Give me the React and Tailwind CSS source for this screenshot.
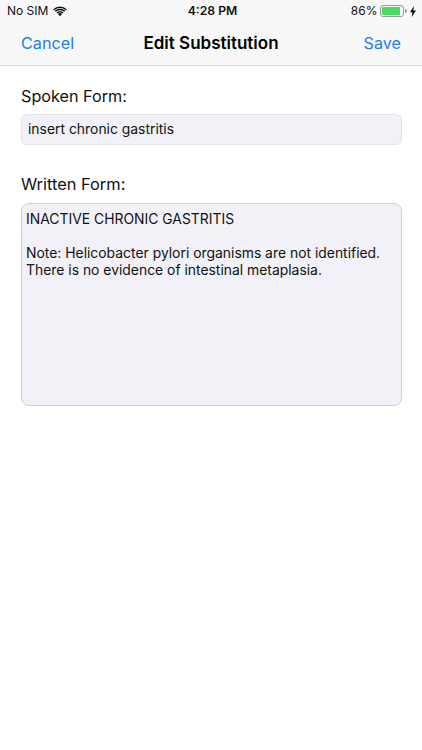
import React from "react";

const font = "font-['Inter','Liberation_Sans',sans-serif]";

const Wifi = () => (
  <svg width="14" height="11" viewBox="0 0 16 12" className="ml-[5px]">
    <path d="M8 11.5 L5.6 8.9 A3.6 3.6 0 0 1 10.4 8.9 Z" fill="#111" />
    <path d="M3.9 7.2 A6 6 0 0 1 12.1 7.2 L10.9 8.4 A4.3 4.3 0 0 0 5.1 8.4 Z" fill="#111" />
    <path d="M1.9 5.2 A8.8 8.8 0 0 1 14.1 5.2 L12.9 6.4 A7.1 7.1 0 0 0 3.1 6.4 Z" fill="#111" />
    <path d="M0.2 3.4 A11.3 11.3 0 0 1 15.8 3.4 L14.6 4.6 A9.6 9.6 0 0 0 1.4 4.6 Z" fill="#111" />
  </svg>
);

const Battery = () => (
  <div className="flex items-center ml-[3px]">
    <div className="w-[24px] h-[12px] rounded-[3px] border border-[#9a9a9a] p-[1px]">
      <div className="w-[86%] h-full rounded-[1px] bg-[#4cd964]" />
    </div>
    <div className="w-[1.5px] h-[4px] bg-[#9a9a9a] rounded-r-sm ml-[1px]" />
  </div>
);

const Bolt = () => (
  <svg width="6" height="11" viewBox="0 0 6 11" className="ml-[3px]">
    <path d="M3.8 0 L0 6.2 H2.4 L1.8 11 L6 4.4 H3.4 Z" fill="#111" />
  </svg>
);

export default function App() {
  return (
    <div className={`w-[422px] h-[750px] bg-white flex flex-col text-black ${font}`}>
      <div className="bg-[#f8f8f8] border-b border-[#d4d4d4] h-[66px] shrink-0">
        <div className="h-[22px] pl-[7px] pr-[6px] grid grid-cols-3 items-center text-[12px] text-[#111]">
          <div className="flex items-center">
            <span>No SIM</span>
            <Wifi />
          </div>
          <div className="text-center font-semibold text-[12.2px] pl-[2px]">4:28 PM</div>
          <div className="flex items-center justify-end">
            <span>86%</span>
            <Battery />
            <Bolt />
          </div>
        </div>
        <div className="h-[43px] px-[21px] flex items-center justify-between relative">
          <span className="text-[16.2px] text-[#1f7fe6]">Cancel</span>
          <span className="absolute left-0 right-0 text-center text-[17px] font-semibold pointer-events-none">Edit Substitution</span>
          <span className="text-[16.2px] text-[#1f7fe6]">Save</span>
        </div>
      </div>
      <div className="pl-[21px] pr-[20px] pt-[20px] flex flex-col">
        <div className="text-[16.2px] leading-[21px] text-[#111]">Spoken Form:</div>
        <div className="mt-[7px] h-[31px] rounded-[6px] border border-[#e3e3e8] bg-[#f1f1f7] px-[6px] flex items-center text-[13.9px] text-[#111]">
          insert chronic gastritis
        </div>
        <div className="mt-[29px] text-[16.4px] leading-[21px] text-[#111]">Written Form:</div>
        <div className="mt-[8px] h-[203px] rounded-[8px] border border-[#cfcfd6] bg-[#f1f1f7] px-[4px] pt-[7px] text-[13.9px] leading-[17px] text-[#111]">
          <div>INACTIVE CHRONIC GASTRITIS</div>
          <div className="mt-[17px]">Note: Helicobacter pylori organisms are not identified.</div>
          <div>There is no evidence of intestinal metaplasia.</div>
        </div>
      </div>
    </div>
  );
}
